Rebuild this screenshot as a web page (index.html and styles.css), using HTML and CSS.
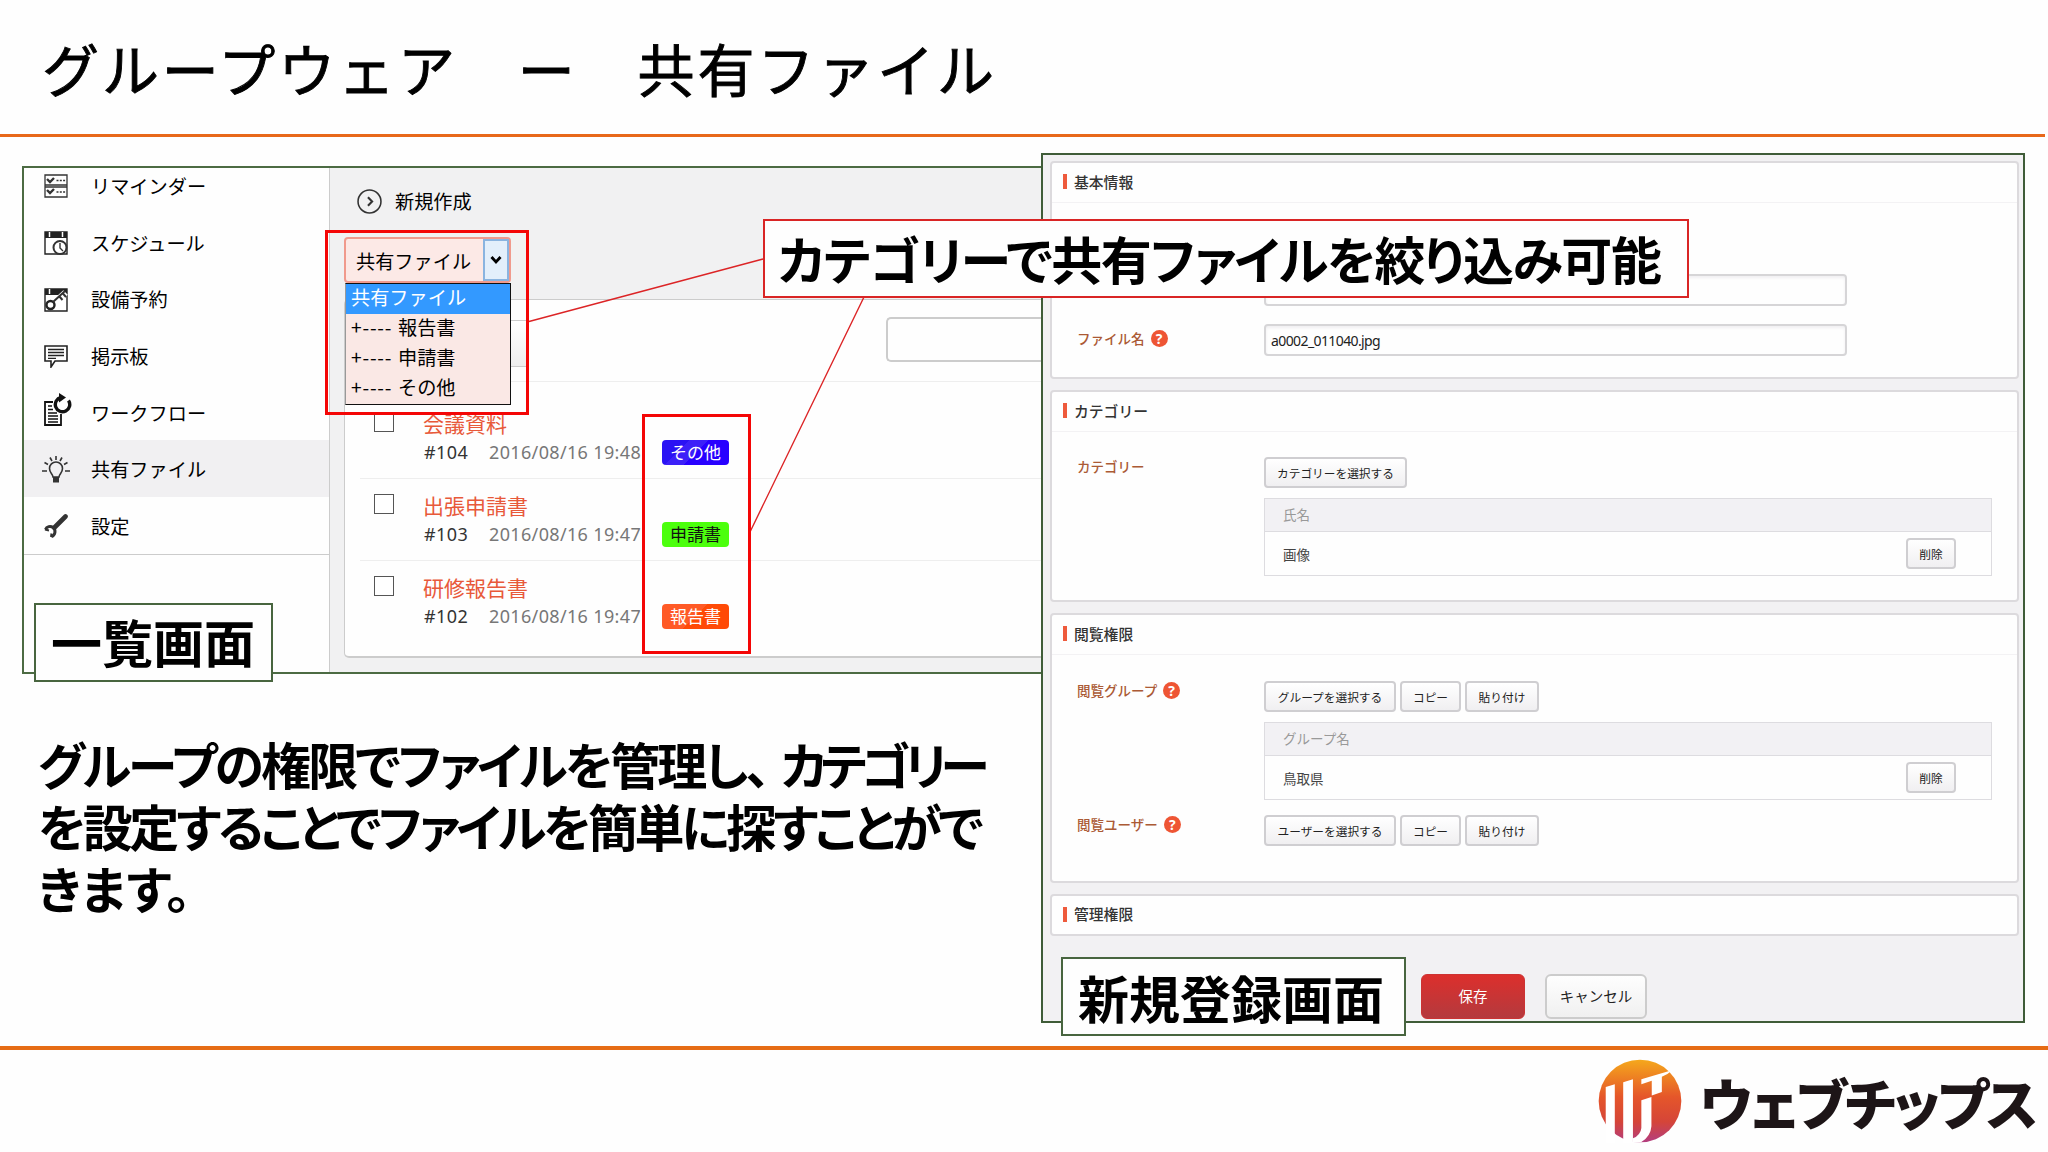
FILE: index.html
```html
<!DOCTYPE html>
<html lang="ja">
<head>
    <meta charset="UTF-8">
    <meta name="viewport" content="width=device-width, initial-scale=1.0">
    <title>グループウェア ー 共有ファイル</title>
    <link rel="stylesheet" href="styles.css">
</head>
<body>

<div class="slide">
    <header class="slide-header">
        <h1>グループウェア　ー　共有ファイル</h1>
    </header>

    <main class="content">
        <div class="left">
            <div class="list-screen">
                <nav class="sidebar">
                    <div class="menu-item">
                        <svg class="icon" viewBox="0 0 24 24"><path d="M1 1h22v22H1zM1 11h22M1 13h22" fill="none" stroke="#333" stroke-width="1.3"/><path d="M3 5l3 3 4-4M3 16l3 3 4-4" fill="none" stroke="#333" stroke-width="2.4"/><path d="M12.500 6.500h9M12.500 18h9" stroke="#333" stroke-width="1.5" stroke-dasharray="2 1.3"/></svg>
                        <span>リマインダー</span>
                    </div>
                    <div class="menu-item">
                        <svg class="icon" viewBox="0 0 24 24"><path d="M1 1h22v22H1z" fill="#fff" stroke="#222" stroke-width="1.4"/><path d="M1 1h22v6H1z" fill="#222"/><path d="M5.500 1v5M18.500 1v5" stroke="#fff" stroke-width="1.5"/><circle cx="16" cy="16.500" r="6.500" fill="#fff" stroke="#333" stroke-width="2"/><path d="M16 12v5l3 3" fill="none" stroke="#333" stroke-width="1.4"/></svg>
                        <span>スケジュール</span>
                    </div>
                    <div class="menu-item">
                        <svg class="icon" viewBox="0 0 24 24"><path d="M1 1h22v22H1z" fill="#fff" stroke="#222" stroke-width="1.4"/><path d="M1 1h22v6H1z" fill="#222"/><path d="M5.500 1v5" stroke="#fff" stroke-width="1.500"/><path d="M9 15L21 4M16 8l3.500 3.500M19 5.500l3 3" stroke="#fff" stroke-width="5"/><circle cx="6.500" cy="17" r="4" fill="none" stroke="#222" stroke-width="2.4"/><path d="M9 14L21 3M15 8l3.500 4M18.500 5l3.500 4" fill="none" stroke="#333" stroke-width="2"/></svg>
                        <span>設備予約</span>
                    </div>
                    <div class="menu-item">
                        <svg class="icon" viewBox="0 0 24 24"><path d="M1 2h22v15H11l-4 6v-6H1z" fill="none" stroke="#222" stroke-width="1.6"/><path d="M4 5.500h16M4 8.500h16M4 11.500h16M4 14.300h8" stroke="#222" stroke-width="1.3"/></svg>
                        <span>掲示板</span>
                    </div>
                    <div class="menu-item">
                        <svg class="icon icon-flow" viewBox="0 0 28 34"><path d="M9 9H1v23h16V21" fill="none" stroke="#111" stroke-width="1.8"/><path d="M4 13h4M4 16.500h5M4 20h9M4 23h10M4 26h10M4 29h10" stroke="#111" stroke-width="1.4"/><path d="M17 4.500A7.200 7.200 0 1 0 24.500 7.500" fill="none" stroke="#111" stroke-width="3.4"/><path d="M15 0l7 4.500-7 5z" fill="#111"/></svg>
                        <span>ワークフロー</span>
                    </div>
                    <div class="menu-item active">
                        <svg class="icon icon-bulb" viewBox="0 0 28 28"><path d="M11 21c0-3-3.500-4-3.500-8.500a6.500 6.500 0 0 1 13 0C20.500 17 17 18 17 21z" fill="none" stroke="#333" stroke-width="1.6"/><path d="M11 21h6v5.500h-6z" fill="#333"/><path d="M14 0v4M8 1.500l2 3.500M20 1.500L18 5M2.500 6.500L6 8.500M25.500 6.500L22 8.500M0 15h5M23 15h5" stroke="#333" stroke-width="1.6"/></svg>
                        <span>共有ファイル</span>
                    </div>
                    <div class="menu-item">
                        <svg class="icon" viewBox="0 0 24 24"><path d="M10.500 13.500L21.500 2.500" stroke="#333" stroke-width="4.600" stroke-linecap="round"/><path d="M1 15.500L5 16.500M7.500 19.500L7 23" stroke="#333" stroke-width="2"/><path d="M1.500 15.500A4.800 4.800 0 0 1 9 13.500A5.200 5.200 0 0 1 7.500 22.500" fill="none" stroke="#333" stroke-width="3"/></svg>
                        <span>設定</span>
                    </div>
                </nav>

                <section class="list-main">
                    <div class="create">
                        <svg viewBox="0 0 24 24"><circle cx="12" cy="12" r="11" fill="none" stroke="#333" stroke-width="1.5"/><path d="M10.500 8l4 4-4 4" fill="none" stroke="#333" stroke-width="2"/></svg>
                        <span>新規作成</span>
                    </div>
                    <div class="file-card">
                        <div class="card-tools">
                            <div class="tool-button"></div>
                            <div class="search"></div>
                        </div>
                        <div class="file-row">
                            <i class="check"></i>
                            <div class="file-info">
                                <a class="file-title">会議資料</a>
                                <div class="file-meta"><b>#104</b><span class="date">2016/08/16 19:48</span><span class="tag blue">その他</span></div>
                            </div>
                        </div>
                        <div class="file-row">
                            <i class="check"></i>
                            <div class="file-info">
                                <a class="file-title">出張申請書</a>
                                <div class="file-meta"><b>#103</b><span class="date">2016/08/16 19:47</span><span class="tag green">申請書</span></div>
                            </div>
                        </div>
                        <div class="file-row">
                            <i class="check"></i>
                            <div class="file-info">
                                <a class="file-title">研修報告書</a>
                                <div class="file-meta"><b>#102</b><span class="date">2016/08/16 19:47</span><span class="tag orange">報告書</span></div>
                            </div>
                        </div>
                    </div>
                </section>
            </div>

            <p class="description">
                <span class="line1">グループの権限でファイルを管理し、<em>カテゴリー</em></span>
                <span class="line2">を設定することでファイルを簡単に探すことがで</span>
                <span class="line3">きます。</span>
            </p>
        </div>

        <div class="form-screen">
            <section class="panel basic">
                <h2>基本情報</h2>
                <div class="field">
                    <div class="label"></div>
                    <div class="input"></div>
                </div>
                <div class="field">
                    <div class="label">ファイル名<i class="help">?</i></div>
                    <div class="input">a0002_011040.jpg</div>
                </div>
            </section>

            <section class="panel category">
                <h2>カテゴリー</h2>
                <div class="field">
                    <div class="label">カテゴリー</div>
                    <div class="value">
                        <div class="buttons"><button class="btn w143">カテゴリーを選択する</button></div>
                        <div class="table">
                            <div class="th">氏名</div>
                            <div class="td">画像<button class="btn">削除</button></div>
                        </div>
                    </div>
                </div>
            </section>

            <section class="panel read">
                <h2>閲覧権限</h2>
                <div class="field">
                    <div class="label">閲覧グループ<i class="help">?</i></div>
                    <div class="value">
                        <div class="buttons"><button class="btn w132">グループを選択する</button><button class="btn w61">コピー</button><button class="btn w74">貼り付け</button></div>
                        <div class="table">
                            <div class="th">グループ名</div>
                            <div class="td">鳥取県<button class="btn">削除</button></div>
                        </div>
                    </div>
                </div>
                <div class="field">
                    <div class="label">閲覧ユーザー<i class="help">?</i></div>
                    <div class="value">
                        <div class="buttons"><button class="btn w132">ユーザーを選択する</button><button class="btn w61">コピー</button><button class="btn w74">貼り付け</button></div>
                    </div>
                </div>
            </section>

            <section class="panel manage">
                <h2>管理権限</h2>
            </section>

            <div class="actions">
                <button class="save">保存</button>
                <button class="cancel">キャンセル</button>
            </div>
        </div>
    </main>

    <footer class="slide-footer">
        <svg class="logo-mark" viewBox="0 0 250 250">
            <defs>
                <linearGradient id="sun" x1="0" y1="0" x2="0" y2="1">
                    <stop offset="0" stop-color="#f5a81c"/>
                    <stop offset=".45" stop-color="#e5562a"/>
                    <stop offset=".75" stop-color="#d54538"/>
                    <stop offset="1" stop-color="#b33d80"/>
                </linearGradient>
            </defs>
            <circle cx="125" cy="125" r="123" fill="url(#sun)"/>
            <path d="M23 83L50 75V250H23z M75 69L104 60V250H75z" fill="#fff"/>
            <path d="M129 60L222 33Q207 47 190 53V98L160 109V65L129 75z" fill="#fff"/>
            <path d="M129 123L159 113V200Q157 230 128 248H104V236Q127 226 129 205z" fill="#fff"/>
        </svg>
        <span class="logo-text">ウェブチップス</span>
    </footer>

    <!-- Open category select -->
    <div class="select">
        <div class="select-box"><span>共有ファイル</span><i><svg viewBox="0 0 12 10"><path d="M1.500 2l4.500 5 4.500-5" fill="none" stroke="#000" stroke-width="2.8"/></svg></i></div>
        <div class="options">
            <div class="option selected">共有ファイル</div>
            <div class="option"><span>+----</span>報告書</div>
            <div class="option"><span>+----</span>申請書</div>
            <div class="option"><span>+----</span>その他</div>
        </div>
    </div>

    <!-- Callouts -->
    <svg class="connectors" viewBox="0 0 2048 1152">
        <path d="M529 321.500L763 259M864 297L750 532" fill="none" stroke="#dc2426" stroke-width="1.4"/>
    </svg>
    <div class="mark mark-select"></div>
    <div class="mark mark-tags"></div>
    <div class="caption caption-filter">カテゴリーで共有ファイルを絞り込み可能</div>
    <div class="caption caption-list">一覧画面</div>
    <div class="caption caption-new">新規登録画面</div>
</div>

</body>
</html>
```

FILE: styles.css
```css
* { box-sizing: border-box; }

body {
    margin: 0;
    background: #fefefe;
    font-family: "Noto Sans CJK JP", sans-serif;
    color: #000;
}

.slide {
    position: relative;
    width: 2048px;
    height: 1152px;
    overflow: hidden;
    display: flex;
    flex-direction: column;
}

.slide-header {
    width: 2045px;
    height: 137px;
    padding-left: 42px;
    border-bottom: 3px solid #e8681a;
}
.slide-header h1 {
    margin: 0;
    font-size: 57px;
    font-weight: 400;
    letter-spacing: 2.9px;
    line-height: 134px;
    white-space: nowrap;
    -webkit-text-stroke: .9px #000;
}

.content {
    height: 909px;
    display: flex;
    align-items: flex-start;
}
.left {
    width: 1019px;
    margin-left: 22px;
}

/* List screen */
.list-screen {
    width: 1022px;
    height: 508px;
    margin-top: 29px;
    display: flex;
    border: 2px solid #4c6b43;
    font-size: 19.200px;
    overflow: hidden;
}
.sidebar {
    width: 306px;
    flex: none;
    border-right: 1px solid #ccc;
    background: #fefefe;
}
.menu-item {
    height: 56.7px;
    padding-left: 20px;
    display: flex;
    align-items: center;
    line-height: 28px;
}
.menu-item:first-child { margin-top: -11px; }
.menu-item:last-child { border-bottom: 1px solid #ccc; height: 57.5px; }
.menu-item.active { background: #f1f0f2; }
.menu-item span { margin: 1px 0 0 23px; }
.icon { width: 24px; height: 24px; margin-top: 2px; flex: none; }
.icon-flow { width: 28px; height: 34px; margin: -4px -4px 0 0; }
.icon-bulb { width: 28px; height: 28px; margin: 2px -2px 0; }

.list-main {
    flex: 1;
    background: #f1f1f2;
    padding-left: 14px;
}
.create {
    height: 131px;
    padding: 19px 0 0 13px;
    display: flex;
    align-items: flex-start;
    line-height: 28px;
}
.create svg { width: 25px; height: 25px; margin: 2px 13px 0 0; }
.file-card {
    height: 359px;
    border: 2px solid #ccc;
    border-width: 1px 0 2px 1px;
    border-radius: 5px 0 0 5px;
    background: #fefefe;
}
.card-tools {
    height: 82px;
    display: flex;
    justify-content: space-between;
    align-items: flex-start;
    padding-top: 17px;
    border-bottom: 1px solid #eee;
}
.tool-button {
    width: 182px;
    height: 47px;
    margin-top: 3px;
    border: 1px solid #ccc;
    background: linear-gradient(#fff, #eee);
}
.search {
    width: 156px;
    height: 45px;
    border: 2px solid #ccc;
    border-right: 0;
    border-radius: 5px 0 0 5px;
    background: #fefefe;
}
.file-row {
    height: 82px;
    margin-left: 15px;
    padding: 29px 0 0 14px;
    display: flex;
    border-bottom: 1px solid #eee;
}
.file-row:nth-child(2) { height: 97px; }
.file-row + .file-row { padding-top: 14px; }
.file-row:last-child { border-bottom: 0; }
.check {
    width: 20px;
    height: 20px;
    margin-top: 1px;
    border: 1.5px solid #555;
    background: #fff;
}
.file-info { margin-left: 29px; }
.file-title {
    display: block;
    height: 28px;
    font-size: 21px;
    line-height: 25px;
    color: #e8593a;
}
.file-meta {
    height: 27px;
    padding-left: 1px;
    display: flex;
    align-items: center;
    font-family: "Noto Sans", "Noto Sans CJK JP", sans-serif;
    font-size: 18px;
    line-height: 27px;
    white-space: nowrap;
}
.file-meta b { width: 65px; font-weight: 400; letter-spacing: .4px; color: #333; }
.date { width: 173px; letter-spacing: .35px; color: #777; }
.tag {
    width: 67px;
    height: 25px;
    border-radius: 4px;
    font: 17px/24px "Noto Sans CJK JP", sans-serif;
    text-align: center;
}
.tag.blue { background: linear-gradient(135deg, #2a12f4 30%, #3c20f8 30%, #3c20f8 50%, #2800ff 50%); color: #fff; }
.tag.green { background: #4cff0d; color: #111; }
.tag.orange { background: linear-gradient(135deg, #ff5a26 50%, #ff4a06 50%); color: #fff; }

.description {
    margin: 58px 0 0 16px;
    font-size: 50px;
    font-weight: 700;
    line-height: 62px;
    font-feature-settings: "palt";
}
.description span { display: block; white-space: nowrap; }
.line1 { letter-spacing: -2.8px; }
.line1 em { margin-left: 13px; font-style: normal; letter-spacing: -6.2px; }
.line2 { letter-spacing: -3.3px; }

/* Form screen */
.form-screen {
    position: relative;
    width: 984px;
    height: 870px;
    flex: none;
    margin-top: 16px;
    padding: 6px 4px 0 7px;
    border: 2px solid #3f5c38;
    background: #f2f1f3;
}
.panel {
    border: 2px solid #dcdadd;
    border-radius: 4px;
    background: #fefefe;
    margin-bottom: 11px;
}
.panel h2 {
    height: 40px;
    margin: 0;
    padding: 0 0 2px 11px;
    display: flex;
    align-items: center;
    border-bottom: 1px solid #f3f2f4;
    font-size: 14.800px;
    font-weight: 500;
    color: #333;
    line-height: 20px;
}
.panel h2::before {
    content: "";
    width: 4px;
    height: 15px;
    margin-right: 7px;
    background: #ee5a3c;
}
.basic { height: 218px; }
.category { height: 212px; }
.read { height: 270px; }
.manage { height: 42px; }
.manage h2 { height: 38px; border: 0; }

.field { display: flex; padding-left: 25px; }
.label {
    width: 187px;
    display: flex;
    align-items: center;
    height: 20px;
    font-size: 13.500px;
    font-weight: 500;
    color: #ab5a35;
    line-height: 20px;
}
.help {
    width: 17px;
    height: 17px;
    margin-left: 6px;
    border-radius: 50%;
    background: #ee5534;
    color: #fff;
    font: 700 14px/17px "Open Sans", sans-serif;
    text-align: center;
}
.input {
    width: 583px;
    height: 32px;
    padding-left: 5px;
    border: 2px solid #d6d5d7;
    border-radius: 4px;
    background: #fefefe;
    box-shadow: inset 0 2px 3px #f0eff1;
    font: 14px/30px "Noto Sans", sans-serif;
    letter-spacing: -.6px;
    color: #222;
}
.basic .field { margin-top: 18px; }
.basic h2 + .field { margin-top: 71px; }
.basic .label { margin-top: 4px; }
.category .field { margin-top: 25px; }
.category .label { margin-top: -1px; }
.read .field { margin-top: 26px; }
.read .label { margin-top: -1px; }
.read .field + .field { margin-top: 15px; }

.value { width: 728px; }
.buttons { display: flex; gap: 4px; }
.btn {
    height: 31px;
    padding: 0;
    border: 2px solid #cfced1;
    border-radius: 4px;
    background: linear-gradient(#fff, #f0eff1);
    font: 11.700px/26px "Noto Sans CJK JP", sans-serif;
    color: #222;
}
.w143 { width: 143px; }
.w132 { width: 132px; }
.w61 { width: 61px; }
.w74 { width: 74px; }
.table {
    margin-top: 10px;
    border: 1px solid #dddce0;
    font-size: 13.500px;
}
.th {
    height: 33px;
    padding-left: 18px;
    border-bottom: 1px solid #dddce0;
    background: #f2f1f4;
    line-height: 31px;
    color: #999;
}
.td {
    height: 43px;
    padding: 0 35px 0 18px;
    display: flex;
    justify-content: space-between;
    align-items: center;
    color: #444;
    line-height: 18px;
}
.td .btn { width: 50px; }

.actions {
    display: flex;
    gap: 20px;
    margin: 38px 0 0 371px;
}
.actions button {
    height: 45px;
    padding: 0;
    border-radius: 6px;
    font: 14.500px/40px "Noto Sans CJK JP", sans-serif;
}
.actions .save {
    width: 104px;
    border: 1px solid #c33;
    background: linear-gradient(#dc2f2c, #b43a3e);
    color: #fff;
    padding-bottom: 2px;
}
.actions .cancel {
    width: 102px;
    border: 2px solid #ccc;
    background: linear-gradient(#fefefe, #f0f0f0);
    color: #222;
    padding-bottom: 2px;
}

.slide-footer {
    height: 106px;
    padding: 0 12px 0 1598px;
    display: flex;
    align-items: flex-start;
    border-top: 4px solid #e66c15;
}
.logo-mark { width: 84px; height: 84px; margin-top: 9px; flex: none; }
.logo-text {
    margin: 9px 0 0 18px;
    font-size: 55px;
    font-weight: 900;
    line-height: 84px;
    letter-spacing: -2.3px;
    font-feature-settings: "palt";
    color: #1d1517;
    white-space: nowrap;
}

/* Dropdown lying over the list screen */
.select {
    position: absolute;
    left: 344px;
    top: 237px;
    width: 167px;
    font-size: 19.200px;
}
.select-box {
    height: 46px;
    display: flex;
    justify-content: space-between;
    padding-left: 10px;
    border: 2px solid #f09a8d;
    border-radius: 4px;
    background: #fce9e6;
    line-height: 44px;
}
.select-box i {
    width: 26px;
    display: flex;
    align-items: center;
    justify-content: center;
    border: 2px solid #8ab4e0;
    background: #e3effb;
}
.select-box svg { width: 12px; height: 10px; }
.options {
    margin-left: 1px;
    border: 1px solid #111;
    border-left-color: #999;
    background: #fae8e5;
}
.option { height: 30px; padding-left: 5px; line-height: 27px; white-space: nowrap; }
.option span { display: inline-block; width: 47px; letter-spacing: .8px; }
.option.selected { background: #3399ff; color: #fff; }

/* Red frames and captions */
.connectors { position: absolute; left: 0; top: 0; width: 2048px; height: 1152px; }
.mark { position: absolute; border: 3px solid #f40606; }
.mark-select { left: 325px; top: 230px; width: 204px; height: 185px; }
.mark-tags { left: 642px; top: 414px; width: 109px; height: 240px; }

.caption {
    position: absolute;
    border: 2px solid #48653f;
    background: #fefefe;
    font-size: 51px;
    font-weight: 700;
    line-height: 74px;
    white-space: nowrap;
}
.caption-filter {
    left: 763px;
    top: 219px;
    width: 926px;
    height: 79px;
    padding-left: 13px;
    border-color: #d92525;
    font-feature-settings: "palt";
    letter-spacing: -1.35px;
}
.caption-list { left: 34px; top: 603px; width: 239px; height: 79px; padding-left: 15px; line-height: 72px; }
.caption-new { left: 1061px; top: 957px; width: 345px; height: 79px; padding-left: 15px; line-height: 77px; }
```
